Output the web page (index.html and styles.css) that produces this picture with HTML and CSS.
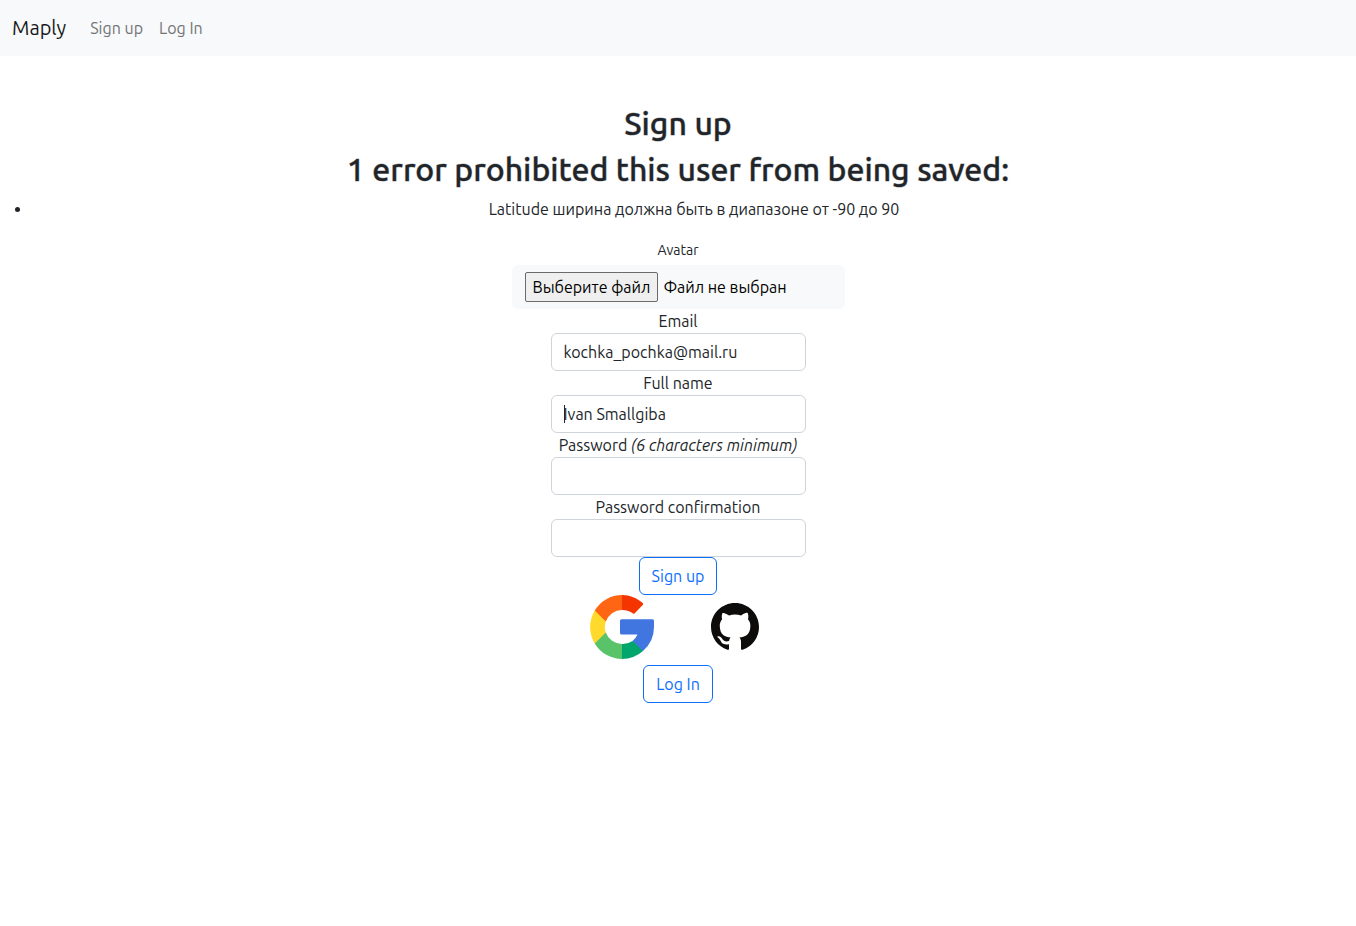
FILE: index.html
```html
<!DOCTYPE html>
<html lang="en">
<head>
<meta charset="utf-8">
<meta name="viewport" content="width=device-width, initial-scale=1">
<title>Maply</title>
<link rel="stylesheet" href="styles.css">
</head>
<body>
<nav class="navbar">
  <a class="brand" href="#">Maply</a>
  <a class="nav-link" href="#">Sign up</a>
  <a class="nav-link" href="#">Log In</a>
</nav>
<main class="page">
  <h2 class="title">Sign up</h2>
  <form class="form">
    <h2 class="title">1 error prohibited this user from being saved:</h2>
    <ul class="errors">
      <li>Latitude ширина должна быть в диапазоне от -90 до 90</li>
    </ul>
    <label class="avatar-label" for="avatar">Avatar</label>
    <div class="file-box">
      <span class="file-button">Выберите файл</span>
      <span>Файл не выбран</span>
      <input class="file-input" id="avatar" type="file">
    </div>
    <label for="email">Email</label>
    <input class="control" id="email" type="email" value="kochka_pochka@mail.ru">
    <label for="name">Full name</label>
    <div class="caret-field">
      <input class="control" id="name" type="text" value="Ivan Smallgiba">
      <span class="caret"></span>
    </div>
    <label for="password">Password <em>(6 characters minimum)</em></label>
    <input class="control" id="password" type="password">
    <label for="confirmation">Password confirmation</label>
    <input class="control" id="confirmation" type="password">
    <button class="button" type="submit">Sign up</button>
  </form>
  <div class="providers">
    <a class="provider" href="#" aria-label="Sign up with Google">
      <svg width="64" height="64" viewBox="0 0 64 64">
        <path fill="#f53500" d="M32 0C40 0 47 3 52.7 8Q53.700 9 52.700 10L44 19Q38.500 15 32 15Z"/>
        <path fill="#ff6614" d="M32 0A32 32 0 0 0 4.700 15.500L7 21L15.800 26.500A17 17 0 0 1 32 15Z"/>
        <path fill="#ffda2d" d="M4.700 15.500A32 32 0 0 0 4.700 48.500L10 46L15.800 37.500A17 17 0 0 1 15.800 26.500Z"/>
        <path fill="#59c36a" d="M4.700 48.500A32 32 0 0 0 32 64L34 56L32 49A17 17 0 0 1 15.800 37.500Z"/>
        <path fill="#00a66c" d="M32 64A32 32 0 0 0 53 56L50 50L42.500 46A17 17 0 0 1 32 49Z"/>
        <path fill="#4175df" d="M31.500 24.300H62.500Q64 24.300 64 26V32A32 32 0 0 1 53 56L42.500 46A17 17 0 0 0 47.500 39.500H31.500Q30 39.500 30 38V25.800Q30 24.300 31.500 24.300Z"/>
      </svg>
    </a>
    <a class="provider" href="#" aria-label="Sign up with GitHub">
      <svg width="48" height="48" viewBox="0 0 16 16" fill="#0d0c0b">
        <path d="M8 0C3.580 0 0 3.580 0 8c0 3.540 2.290 6.530 5.470 7.590.4.070.55-.17.55-.38 0-.19-.01-.82-.01-1.490-2.010.37-2.530-.49-2.690-.94-.09-.23-.48-.94-.82-1.130-.28-.15-.68-.52-.01-.53.63-.01 1.080.58 1.230.82.72 1.210 1.870.87 2.330.66.07-.52.28-.87.51-1.070-1.780-.2-3.640-.89-3.640-3.950 0-.87.31-1.590.82-2.150-.08-.2-.36-1.020.08-2.120 0 0 .67-.21 2.200.82.64-.18 1.320-.27 2-.27s1.360.09 2 .27c1.530-1.040 2.200-.82 2.200-.82.44 1.100.16 1.920.08 2.120.51.56.82 1.270.82 2.150 0 3.070-1.870 3.750-3.650 3.950.29.25.54.73.54 1.480 0 1.070-.01 1.930-.01 2.200 0 .21.15.46.55.38A8.010 8.010 0 0 0 16 8c0-4.420-3.580-8-8-8Z"/>
      </svg>
    </a>
  </div>
  <a class="button" href="#">Log In</a>
</main>
</body>
</html>
```
FILE: styles.css
```css
* { box-sizing: border-box; }

body {
  margin: 0;
  background: #fff;
  color: #212529;
  font-family: Ubuntu, "Noto Sans", "Open Sans", sans-serif;
  font-size: 16px;
  line-height: 24px;
}

.navbar {
  display: flex;
  align-items: center;
  min-height: 56px;
  padding: 8px 12px;
  background: #f8f9fa;
}

.brand {
  margin-right: 16px;
  color: #18191a;
  font-size: 20px;
  line-height: 30px;
  text-decoration: none;
}

.nav-link {
  padding: 8px;
  color: #737475;
  text-decoration: none;
}

.page,
.form {
  display: flex;
  flex-direction: column;
  align-items: center;
}

.page {
  padding-top: 48px;
  text-align: center;
}

.form { width: 100%; }

.title {
  margin: 0 0 8px;
  font-size: 32px;
  font-weight: 500;
  line-height: 1.2;
  -webkit-text-stroke: 1px rgba(33, 37, 41, 0.4);
}

.errors {
  align-self: stretch;
  margin: 0 0 16px;
  padding-left: 32px;
}

.avatar-label {
  margin: 1px 0 3px;
  font-size: 14px;
}

.file-box {
  position: relative;
  display: flex;
  align-items: center;
  gap: 5px;
  width: 333px;
  height: 44px;
  padding: 0 13px;
  border-radius: 6px;
  background: #f8f9fa;
  color: #000;
}

.file-button {
  padding: 2px 7px;
  border: 1px solid #6b6b6b;
  border-radius: 2px;
  background: #efefef;
}

.file-input {
  position: absolute;
  inset: 0;
  width: 100%;
  opacity: 0;
}

.control {
  display: block;
  width: 255px;
  height: 38px;
  padding: 6px 12px;
  border: 1px solid #ced4da;
  border-radius: 6px;
  background: #fff;
  color: #212529;
  font: inherit;
}

.caret-field { position: relative; }

.caret {
  position: absolute;
  top: 10px;
  left: 13px;
  width: 1px;
  height: 18px;
  background: #212529;
}

.button {
  padding: 6px 12px;
  border: 1px solid #0d6efd;
  border-radius: 6px;
  background: #fff;
  color: #0d6efd;
  font: inherit;
  text-decoration: none;
}

.providers {
  display: flex;
  gap: 49px;
  margin-bottom: 6px;
}

.provider {
  display: flex;
  align-items: center;
  justify-content: center;
  width: 64px;
  height: 64px;
}
```
